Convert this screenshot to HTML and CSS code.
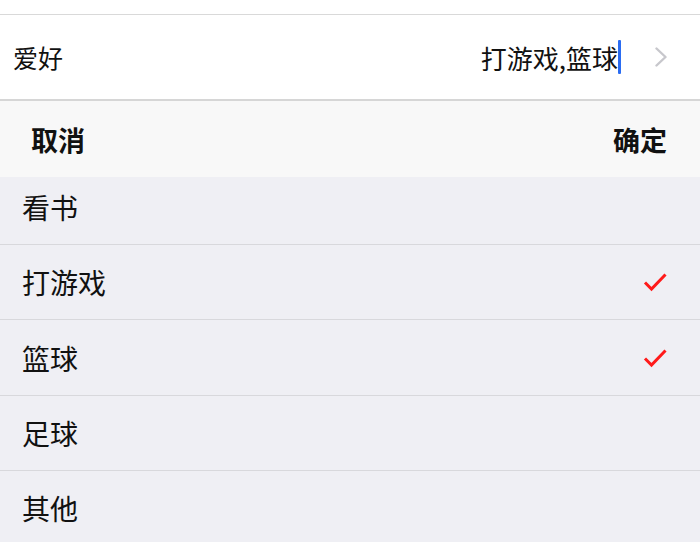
FILE: index.html
```html
<!DOCTYPE html>
<html lang="zh-CN">
<head>
<meta charset="utf-8">
<link rel="stylesheet" href="styles.css">
</head>
<body>
<div class="top-space"></div>
<div class="field">
  <span class="field-label">爱好</span>
  <span class="field-value">打游戏,篮球<span class="caret"></span></span>
  <svg class="chevron" width="13" height="20" viewBox="0 0 13 20"><polyline points="1.5,1.5 10.5,10 1.5,18.5" fill="none" stroke="#c7c7cc" stroke-width="2.4" stroke-linecap="round" stroke-linejoin="round"/></svg>
</div>
<div class="toolbar">
  <span class="tb-btn">取消</span>
  <span class="tb-btn">确定</span>
</div>
<div class="list">
  <div class="list-inner">
    <div class="row"><span>看书</span></div>
    <div class="row"><span>打游戏</span><svg class="check" width="24" height="20" viewBox="0 0 24 20"><polyline points="2,10.5 8.5,17 22.5,2.5" fill="none" stroke="#ff1a1a" stroke-width="3"/></svg></div>
    <div class="row"><span>篮球</span><svg class="check" width="24" height="20" viewBox="0 0 24 20"><polyline points="2,10.5 8.5,17 22.5,2.5" fill="none" stroke="#ff1a1a" stroke-width="3"/></svg></div>
    <div class="row"><span>足球</span></div>
    <div class="row"><span>其他</span></div>
  </div>
</div>
</body>
</html>
```
FILE: styles.css
```css
html, body {
  margin: 0;
  padding: 0;
  width: 700px;
  height: 542px;
  overflow: hidden;
  background: #efeff4;
  font-family: "Noto Sans CJK SC", "Noto Sans", sans-serif;
  color: #111;
}
.top-space {
  height: 14px;
  background: #fff;
  border-bottom: 1px solid #d9d9d9;
}
.field {
  height: 84px;
  background: #fff;
  border-bottom: 2px solid #d6d6d6;
  display: flex;
  align-items: center;
  padding: 0 32px 0 13px;
  font-size: 25px;
}
.field-label {
  flex: 1;
}
.field-value {
  display: flex;
  align-items: center;
  font-size: 26px;
}
.caret {
  display: inline-block;
  width: 3px;
  height: 34px;
  border-radius: 1px;
  background: #2a6cf2;
  margin-left: 0;
}
.chevron {
  margin-left: 34px;
  display: block;
}
.toolbar {
  height: 76px;
  background: #f8f8f8;
  display: flex;
  align-items: center;
  justify-content: space-between;
  padding: 0 33px 0 31px;
  font-size: 27px;
  font-weight: bold;
}
.list {
  overflow: hidden;
  height: 365px;
}
.list-inner {
  margin-top: -7px;
}
.row {
  height: 74px;
  border-bottom: 1px solid #d8d8dc;
  display: flex;
  align-items: center;
  justify-content: space-between;
  padding: 0 33px 0 22px;
  font-size: 28px;
}
.row:nth-child(3) {
  height: 75px;
}
.check {
  display: block;
}
```
